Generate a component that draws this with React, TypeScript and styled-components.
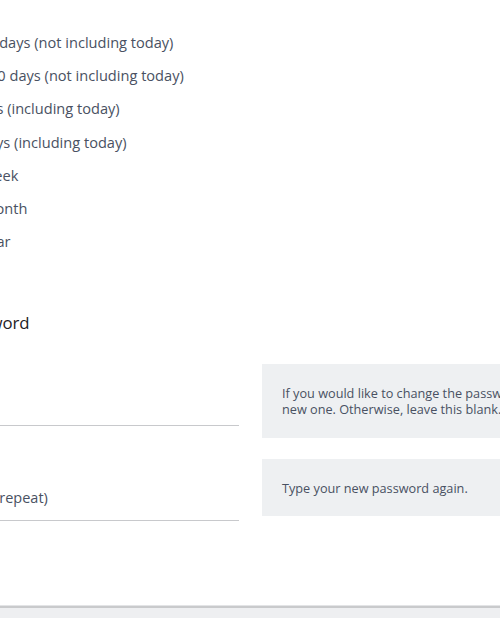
import React from "react";
import styled, { createGlobalStyle } from "styled-components";

const Global = createGlobalStyle`
  html, body { margin: 0; padding: 0; background: #fff; }
  body { font-family: "Open Sans", "Noto Sans", sans-serif; overflow: hidden; }
  * { box-sizing: border-box; }
`;

const Page = styled.div`
  width: 500px;
  height: 618px;
  display: flex;
  flex-direction: column;
  overflow: hidden;
  background: #fff;
`;

const Content = styled.div`
  flex: 1;
  display: flex;
  flex-direction: column;
  overflow: hidden;
`;

const OptionList = styled.ul`
  list-style: none;
  margin: 0;
  padding: 31px 0 0 0;
  display: flex;
  flex-direction: column;
  gap: 11.2px;
`;

const OptionItem = styled.li<{ $shift: number }>`
  margin-left: ${(p) => -p.$shift}px;
  font-size: 14.6px;
  line-height: 22px;
  color: #495162;
  white-space: nowrap;
`;

const SectionTitle = styled.h3`
  margin: 59px 0 0 -46px;
  font-size: 16.8px;
  font-weight: 400;
  line-height: 24px;
  color: #1d2125;
  white-space: nowrap;
`;

const Fields = styled.div`
  margin-top: 29px;
  display: flex;
  flex-direction: column;
  gap: 21px;
`;

const FieldRow = styled.div`
  display: grid;
  grid-template-columns: 239px 1fr;
  column-gap: 23px;
  align-items: start;
`;

const InputClip = styled.div`
  overflow: hidden;
`;

const Input = styled.input<{ $shift: number }>`
  display: block;
  margin: 16px 0 0 ${(p) => -p.$shift}px;
  height: 46px;
  width: calc(100% + ${(p) => p.$shift}px);
  border: none;
  border-bottom: 1px solid #c8c9cc;
  background: transparent;
  padding: 0;
  font-family: inherit;
  font-size: 14.5px;
  color: #495162;
  outline: none;
  &::placeholder { color: #495162; opacity: 1; }
`;

const HelpBox = styled.div<{ $tall?: boolean }>`
  background: #eef0f2;
  padding: ${(p) => (p.$tall ? "21px 0 21px 20px" : "21px 0 19px 20px")};
  min-height: ${(p) => (p.$tall ? 74 : 57)}px;
  font-size: 12.7px;
  line-height: 16px;
  color: #495162;
  white-space: nowrap;
  overflow: hidden;
`;

const Footer = styled.div`
  height: 12px;
  border-top: 2px solid #c9cacc;
  box-shadow: 0 -1px 0 #e3e4e6;
  background: #eeeff1;
  flex-shrink: 0;
`;

const options: { text: string; shift: number }[] = [
  { text: "7 days (not including today)", shift: 13 },
  { text: "30 days (not including today)", shift: 11 },
  { text: "ays (including today)", shift: 19 },
  { text: "days (including today)", shift: 21 },
  { text: "week", shift: 17 },
  { text: "month", shift: 18 },
  { text: "year", shift: 19 },
];

export default function App() {
  return (
    <Page>
      <Global />
      <Content>
        <OptionList>
          {options.map((o) => (
            <OptionItem key={o.text} $shift={o.shift}>
              {o.text}
            </OptionItem>
          ))}
        </OptionList>
        <SectionTitle>Password</SectionTitle>
        <Fields>
          <FieldRow>
            <InputClip>
              <Input type="password" $shift={0} aria-label="New password" />
            </InputClip>
            <HelpBox $tall>
              If you would like to change the password, type a
              <br />
              new one. Otherwise, leave this blank.
            </HelpBox>
          </FieldRow>
          <FieldRow>
            <InputClip>
              <Input type="password" $shift={5} placeholder="(repeat)" aria-label="New password (repeat)" />
            </InputClip>
            <HelpBox>Type your new password again.</HelpBox>
          </FieldRow>
        </Fields>
      </Content>
      <Footer />
    </Page>
  );
}
